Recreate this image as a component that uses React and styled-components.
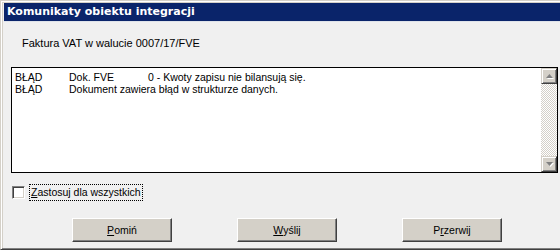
import styled, { createGlobalStyle } from "styled-components";

const GlobalStyle = createGlobalStyle`
  html, body {
    margin: 0;
    padding: 0;
    background: #f0f0f0;
  }
  body {
    font-family: "Liberation Sans", Arial, sans-serif;
    font-size: 10.5px;
    color: #000;
  }
`;

const messages = [
  { level: "BŁĄD", source: "Dok. FVE", text: "0 - Kwoty zapisu nie bilansują się." },
  { level: "BŁĄD", text: "Dokument zawiera błąd w strukturze danych." },
];

const buttons = [
  { key: "P", rest: "omiń" },
  { key: "W", rest: "yślij" },
  { pre: "P", key: "r", rest: "zerwij" },
];

export default function App() {
  return (
    <>
      <GlobalStyle />
      <Window>
        <TitleBar>Komunikaty obiektu integracji</TitleBar>
        <Body>
          <Heading>Faktura VAT w walucie 0007/17/FVE</Heading>
          <ListBox>
            <ListRows>
              {messages.map((m, i) => (
                <Row key={i}>
                  <Cell>{m.level}</Cell>
                  {m.source ? (
                    <>
                      <Cell>{m.source}</Cell>
                      <Cell>{m.text}</Cell>
                    </>
                  ) : (
                    <Cell $span>{m.text}</Cell>
                  )}
                </Row>
              ))}
            </ListRows>
            <ScrollBar>
              <ScrollButton>
                <svg width="7" height="4" viewBox="0 0 7 4">
                  <path d="M3.5 0 L7 4 L0 4 Z" fill="#808080" />
                </svg>
              </ScrollButton>
              <Track />
              <ScrollButton>
                <svg width="7" height="4" viewBox="0 0 7 4">
                  <path d="M0 0 L7 0 L3.5 4 Z" fill="#808080" />
                </svg>
              </ScrollButton>
            </ScrollBar>
          </ListBox>
          <CheckRow>
            <CheckBox />
            <CheckLabel>
              <u>Z</u>astosuj dla wszystkich
            </CheckLabel>
          </CheckRow>
          <ButtonRow>
            {buttons.map((b, i) => (
              <Button key={i}>
                {b.pre}
                <u>{b.key}</u>
                {b.rest}
              </Button>
            ))}
          </ButtonRow>
        </Body>
      </Window>
    </>
  );
}

const Window = styled.div`
  width: 560px;
  height: 250px;
  box-sizing: border-box;
  display: flex;
  flex-direction: column;
  background: #f0f0f0;
  border-top: 1px solid #d4d0c8;
  border-left: 1px solid #d4d0c8;
  border-bottom: 1px solid #404040;
  box-shadow: inset 1px 1px 0 #fff, inset 0 -1px 0 #808080, inset 2px 2px 0 #d4d0c8;
  padding: 2px 0 3px 3px;
`;

const TitleBar = styled.div`
  height: 18px;
  line-height: 18px;
  background: #0a246a;
  color: #fff;
  font-family: "DejaVu Sans", Verdana, sans-serif;
  font-weight: bold;
  font-size: 11px;
  padding-left: 3px;
  border-bottom: 1px solid #dfe3ea;
`;

const Body = styled.div`
  flex: 1;
  display: flex;
  flex-direction: column;
  padding: 0 0 0 7px;
`;

const Heading = styled.div`
  margin: 15px 0 0 11px;
  height: 13px;
  line-height: 13px;
  font-size: 11px;
`;

const ListBox = styled.div`
  margin-top: 17px;
  width: 547px;
  height: 106px;
  box-sizing: border-box;
  border: 1px solid #000;
  background: #fff;
  display: flex;
`;

const ListRows = styled.div`
  flex: 1;
  padding: 3px 0 0 3px;
`;

const Row = styled.div`
  display: grid;
  grid-template-columns: 54px 79px 1fr;
  height: 12px;
  line-height: 12px;
`;

const Cell = styled.span`
  white-space: nowrap;
  grid-column: ${(p) => (p.$span ? "2 / 4" : "auto")};
`;

const ScrollBar = styled.div`
  width: 16px;
  display: flex;
  flex-direction: column;
`;

const ScrollButton = styled.div`
  width: 16px;
  height: 16px;
  box-sizing: border-box;
  background: #d4d0c8;
  border-top: 1px solid #d4d0c8;
  border-left: 1px solid #d4d0c8;
  border-right: 1px solid #404040;
  border-bottom: 1px solid #404040;
  box-shadow: inset 1px 1px 0 #fff, inset -1px -1px 0 #808080;
  display: flex;
  align-items: center;
  justify-content: center;

  svg {
    filter: drop-shadow(1px 1px 0 #fff);
  }
`;

const Track = styled.div`
  flex: 1;
  background-color: #fff;
  background-image: repeating-conic-gradient(#d4d0c8 0 25%, #fff 0 50%);
  background-size: 2px 2px;
`;

const CheckRow = styled.div`
  display: flex;
  align-items: center;
  margin-top: 12px;
  margin-left: 1px;
  gap: 5px;
`;

const CheckBox = styled.div`
  width: 13px;
  height: 13px;
  box-sizing: border-box;
  background: #fff;
  border-top: 1px solid #808080;
  border-left: 1px solid #808080;
  border-right: 1px solid #fff;
  border-bottom: 1px solid #fff;
  box-shadow: inset 1px 1px 0 #404040, inset -1px -1px 0 #d4d0c8;
`;

const CheckLabel = styled.span`
  outline: 1px dotted #000;
  padding: 1px 1px;
  line-height: 13px;
`;

const ButtonRow = styled.div`
  display: flex;
  gap: 65px;
  margin-top: 18px;
  margin-left: 61px;
`;

const Button = styled.div`
  width: 100px;
  height: 24px;
  box-sizing: border-box;
  background: #d4d0c8;
  border-top: 1px solid #fff;
  border-left: 1px solid #fff;
  border-right: 1px solid #404040;
  border-bottom: 1px solid #404040;
  box-shadow: inset -1px -1px 0 #808080;
  display: flex;
  align-items: center;
  justify-content: center;
  padding-bottom: 1px;
`;
